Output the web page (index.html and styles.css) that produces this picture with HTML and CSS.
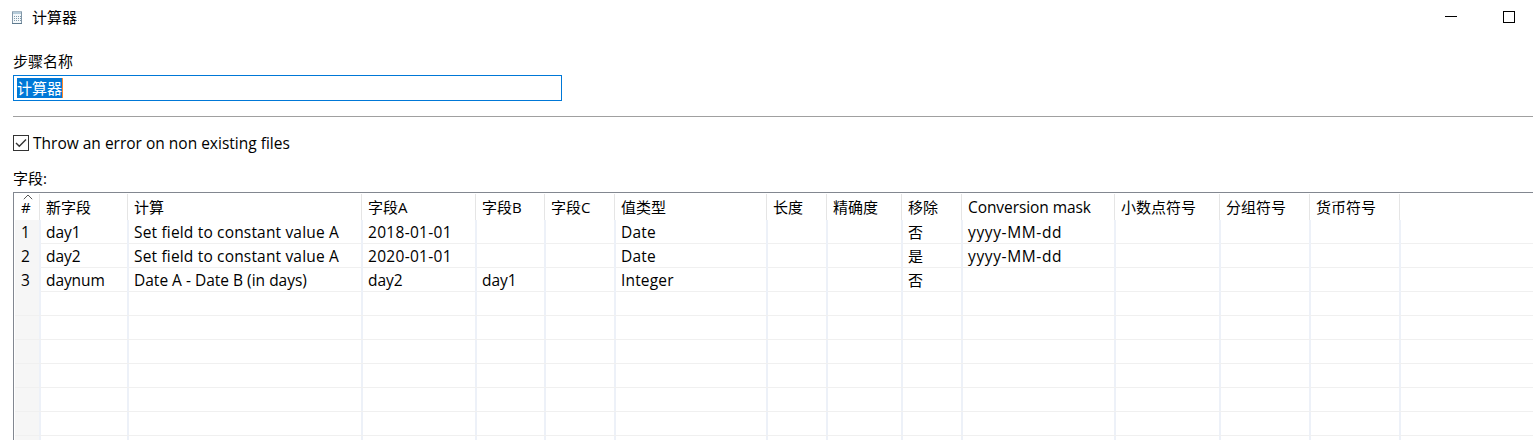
FILE: index.html
```html
<!DOCTYPE html>
<html lang="zh-CN">
<head>
<meta charset="utf-8">
<title>计算器</title>
<link rel="stylesheet" href="styles.css">
</head>
<body>
<header class="titlebar">
  <svg class="app-icon" width="10" height="13" viewBox="0 0 10 13" shape-rendering="crispEdges">
    <rect x="0.5" y="0.5" width="9" height="12" fill="#f4f8fa" stroke="#8297a8"/>
    <rect x="0" y="0" width="10" height="1" fill="#a9b9c5"/>
    <rect x="1" y="1" width="8" height="2" fill="#b5cbd9"/>
    <path d="M2 5.5h1m1 0h1m1 0h1m1 0h1M2 7.5h1m1 0h1m1 0h1m1 0h1M2 9.5h1m1 0h1m1 0h1m1 0h1" stroke="#8099aa"/>
    <rect x="0" y="12" width="10" height="1" fill="#5e7a8e"/>
  </svg>
  <h1 class="title">计算器</h1>
  <svg class="minimize" width="12" height="12" viewBox="0 0 12 12" shape-rendering="crispEdges"><path d="M0 5.5h12" stroke="#000"/></svg>
  <svg class="maximize" width="12" height="12" viewBox="0 0 12 12" shape-rendering="crispEdges"><rect x=".5" y=".5" width="11" height="11" fill="none" stroke="#000"/></svg>
</header>
<main class="dialog">
  <div class="label step-label">步骤名称</div>
  <div class="step-input"><span class="selection">计算器</span></div>
  <div class="separator"></div>
  <div class="check-row">
    <svg width="16" height="16" viewBox="0 0 16 16"><rect x=".5" y=".5" width="15" height="15" fill="#fff" stroke="#333"/><path d="M3 8l3.3 3.3L13 4.6" fill="none" stroke="#333" stroke-width="1.4"/></svg>
    <span class="latin">Throw an error on non existing files</span>
  </div>
  <div class="label fields-label">字段:</div>
  <section class="table">
    <div class="row head">
      <span class="num"><svg class="sort" width="10" height="6" viewBox="0 0 10 6"><path d="M.8 5.2L5 1l4.2 4.2" fill="none" stroke="#555"/></svg>#</span><span>新字段</span><span>计算</span><span>字段A</span><span>字段B</span><span>字段C</span><span>值类型</span><span>长度</span><span>精确度</span><span>移除</span><span class="latin tight">Conversion mask</span><span>小数点符号</span><span>分组符号</span><span>货币符号</span>
    </div>
    <div class="row"><span class="num">1</span><span>day1</span><span class="calc">Set field to constant value A</span><span class="date">2018-01-01</span><span></span><span></span><span class="calc">Date</span><span></span><span></span><span class="cjk">否</span><span class="mask">yyyy-MM-dd</span><span></span><span></span><span></span></div>
    <div class="row"><span class="num">2</span><span>day2</span><span class="calc">Set field to constant value A</span><span class="date">2020-01-01</span><span></span><span></span><span class="calc">Date</span><span></span><span></span><span class="cjk">是</span><span class="mask">yyyy-MM-dd</span><span></span><span></span><span></span></div>
    <div class="row"><span class="num">3</span><span class="tight">daynum</span><span>Date A - Date B (in days)</span><span>day2</span><span>day1</span><span></span><span class="calc">Integer</span><span></span><span></span><span class="cjk">否</span><span></span><span></span><span></span><span></span></div>
    <div class="row"><span class="num"></span><span></span><span></span><span></span><span></span><span></span><span></span><span></span><span></span><span></span><span></span><span></span><span></span><span></span></div>
    <div class="row"><span class="num"></span><span></span><span></span><span></span><span></span><span></span><span></span><span></span><span></span><span></span><span></span><span></span><span></span><span></span></div>
    <div class="row"><span class="num"></span><span></span><span></span><span></span><span></span><span></span><span></span><span></span><span></span><span></span><span></span><span></span><span></span><span></span></div>
    <div class="row"><span class="num"></span><span></span><span></span><span></span><span></span><span></span><span></span><span></span><span></span><span></span><span></span><span></span><span></span><span></span></div>
    <div class="row"><span class="num"></span><span></span><span></span><span></span><span></span><span></span><span></span><span></span><span></span><span></span><span></span><span></span><span></span><span></span></div>
    <div class="row"><span class="num"></span><span></span><span></span><span></span><span></span><span></span><span></span><span></span><span></span><span></span><span></span><span></span><span></span><span></span></div>
    <div class="row"><span class="num"></span><span></span><span></span><span></span><span></span><span></span><span></span><span></span><span></span><span></span><span></span><span></span><span></span><span></span></div>
  </section>
</main>
</body>
</html>
```
FILE: styles.css
```css
* { box-sizing: border-box; }
body {
  margin: 0;
  height: 440px;
  overflow: hidden;
  background: #fff;
  color: #000;
  font: 15px/20px "Open Sans", "Noto Sans CJK SC", sans-serif;
}
.titlebar {
  display: flex;
  align-items: center;
  height: 34px;
  padding: 0 18px 0 12px;
}
.title { margin: 0 auto 0 10px; font-size: 15px; font-weight: 400; }
.minimize { margin-right: 46px; }
.dialog { padding-left: 13px; }
.label { height: 20px; }
.step-label { margin-top: 17px; }
.step-input {
  width: 549px;
  height: 26px;
  margin-top: 4px;
  padding: 2px 3px;
  border: 1px solid #0078d7;
}
.selection {
  display: block;
  width: 46px;
  height: 20px;
  border-right: 1px solid #ff8728;
  background: #0078d7;
  color: #fff;
}
.separator { height: 1px; margin-top: 15px; background: #a0a0a0; }
.check-row {
  display: flex;
  align-items: center;
  gap: 4px;
  height: 20px;
  margin-top: 16px;
}
.fields-label { margin-top: 15px; }
.table {
  height: 248px;
  margin-top: 4px;
  padding: 1px 0 0 1px;
  border: solid #828790;
  border-width: 1px 0 0 1px;
  overflow: hidden;
}
.row {
  display: grid;
  grid-template-columns: 26px 88px 234px 114px 69px 70px 152px 60px 75px 60px 153px 105px 90px 90px;
  height: 24px;
  border-bottom: 1px solid #f0f0f0;
  font-size: 15.5px;
  line-height: 24px;
  white-space: nowrap;
}
.row > span { padding-left: 5px; border-right: 2px solid #edf1f8; }
.row > .num { padding-left: 6px; background: #f6f6f6; }
.row > .cjk { font-size: 15px; }
.head { height: 26px; border: 0; font-size: 15px; line-height: 27px; }
.head > span,
.head > .num {
  position: relative;
  border-right: 1px solid transparent;
  background: linear-gradient(#e5e5e5, #e5e5e5) right 0 top 0 / 1px 26px no-repeat padding-box;
}
.sort { position: absolute; left: 8px; top: 0; }
.latin { font-size: 15.5px; }
.calc { letter-spacing: .17px; }
.date { letter-spacing: .3px; }
.mask { letter-spacing: .62px; }
.tight { letter-spacing: -.08px; }
```
